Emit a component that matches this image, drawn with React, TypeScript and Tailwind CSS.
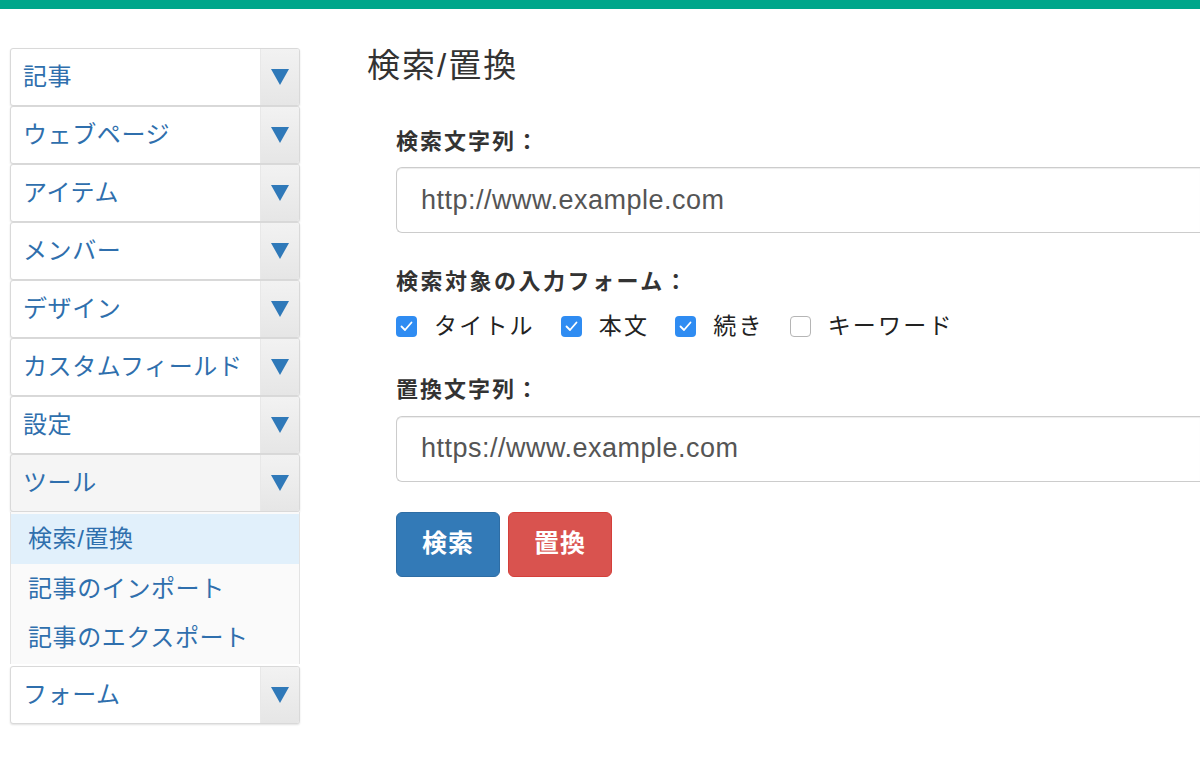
import React from 'react';

const menu = ['記事', 'ウェブページ', 'アイテム', 'メンバー', 'デザイン', 'カスタムフィールド', '設定'];
const subItems = ['検索/置換', '記事のインポート', '記事のエクスポート'];

const font = { fontFamily: '"Helvetica Neue", "Liberation Sans", "Noto Sans CJK JP", sans-serif' };

const MenuRow = ({ label, open = false }: { label: string; open?: boolean }) => (
  <div
    className={`flex h-[58px] border border-[#d9d9d9] rounded-[3px] shadow-[0_1px_2px_rgba(0,0,0,0.12)] overflow-hidden ${
      open ? 'bg-[#f5f5f5]' : 'bg-white'
    }`}
  >
    <div className="flex-1 flex items-center pl-3 text-[24px] text-[#2f6fad] tracking-[0.6px] whitespace-nowrap">{label}</div>
    <div className="w-[39px] flex items-center justify-center bg-gradient-to-b from-[#f2f2f2] to-[#e6e6e6] border-l border-[#e8e8e8]">
      <svg width="20" height="18" viewBox="0 0 20 18">
        <path d="M1 1 H19 L10 17 Z" fill="#2f79b9" />
      </svg>
    </div>
  </div>
);

const Check = ({ checked, label }: { checked: boolean; label: string }) => (
  <label className="flex items-center gap-[17px] mr-[28px]">
    {checked ? (
      <span className="w-[21px] h-[21px] rounded-[4px] bg-[#2f8cf2] flex items-center justify-center">
        <svg width="13" height="11" viewBox="0 0 13 11">
          <path d="M1.5 5.5 L5 9 L11.5 1.5" stroke="white" strokeWidth="1.8" fill="none" strokeLinecap="round" strokeLinejoin="round" />
        </svg>
      </span>
    ) : (
      <span className="w-[21px] h-[21px] rounded-[4px] bg-white border border-[#b5b5b5]" />
    )}
    <span className="text-[23px] tracking-[2.2px] -mr-[2px] text-[#222]">{label}</span>
  </label>
);

export default function App() {
  return (
    <div className="min-h-[759px] bg-white" style={font}>
      <div className="h-[9px] bg-[#00a68a]" />
      <div className="flex pt-[39px]">
        {/* Sidebar */}
        <div className="w-[290px] ml-[10px] flex flex-col">
          {menu.map((m) => (
            <MenuRow key={m} label={m} />
          ))}
          <MenuRow label="ツール" open />
          <div className="bg-[#fafafa] border-x border-[#e3e3e3] pb-[2px] mb-[2px]">
            {subItems.map((s, i) => (
              <div
                key={s}
                className={`flex items-center pl-[17px] text-[24px] tracking-[0.6px] text-[#2f6fad] ${
                  i === 0 ? 'h-[50px] mt-[2px] bg-[#e1f0fb]' : 'h-[49px]'
                }`}
              >
                {s}
              </div>
            ))}
          </div>
          <MenuRow label="フォーム" />
        </div>

        {/* Main */}
        <div className="flex-1 ml-[67px]">
          <h1 className="text-[33px] tracking-[2px] text-[#333] leading-none mt-[1px]">検索/置換</h1>
          <div className="ml-[29px] mt-[43px]">
            <div className="text-[22px] tracking-[2px] font-bold text-[#333]">検索文字列：</div>
            <div className="mt-[9px] h-[66px] border border-[#ccc] rounded-l-[6px] border-r-0 flex items-center pl-6 text-[27px] tracking-[0.5px] text-[#555] shadow-[inset_0_1px_1px_rgba(0,0,0,0.075)]">
              http://www.example.com
            </div>

            <div className="mt-[32px] text-[22px] tracking-[2.5px] font-bold text-[#333]">検索対象の入力フォーム：</div>
            <div className="flex items-center mt-[11px]">
              <Check checked label="タイトル" />
              <Check checked label="本文" />
              <Check checked label="続き" />
              <Check checked={false} label="キーワード" />
            </div>

            <div className="mt-[29px] text-[22px] tracking-[2px] font-bold text-[#333]">置換文字列：</div>
            <div className="mt-[10px] h-[66px] border border-[#ccc] rounded-l-[6px] border-r-0 flex items-center pl-6 text-[27px] tracking-[0.5px] text-[#555] shadow-[inset_0_1px_1px_rgba(0,0,0,0.075)]">
              https://www.example.com
            </div>

            <div className="flex gap-[8px] mt-[30px]">
              <button className="w-[104px] h-[65px] rounded-[6px] bg-[#337ab7] border border-[#2e6da4] text-white text-[25px] tracking-[1px] font-bold">
                検索
              </button>
              <button className="w-[104px] h-[65px] rounded-[6px] bg-[#d9534f] border border-[#d43f3a] text-white text-[25px] tracking-[1px] font-bold">
                置換
              </button>
            </div>
          </div>
        </div>
      </div>
    </div>
  );
}
